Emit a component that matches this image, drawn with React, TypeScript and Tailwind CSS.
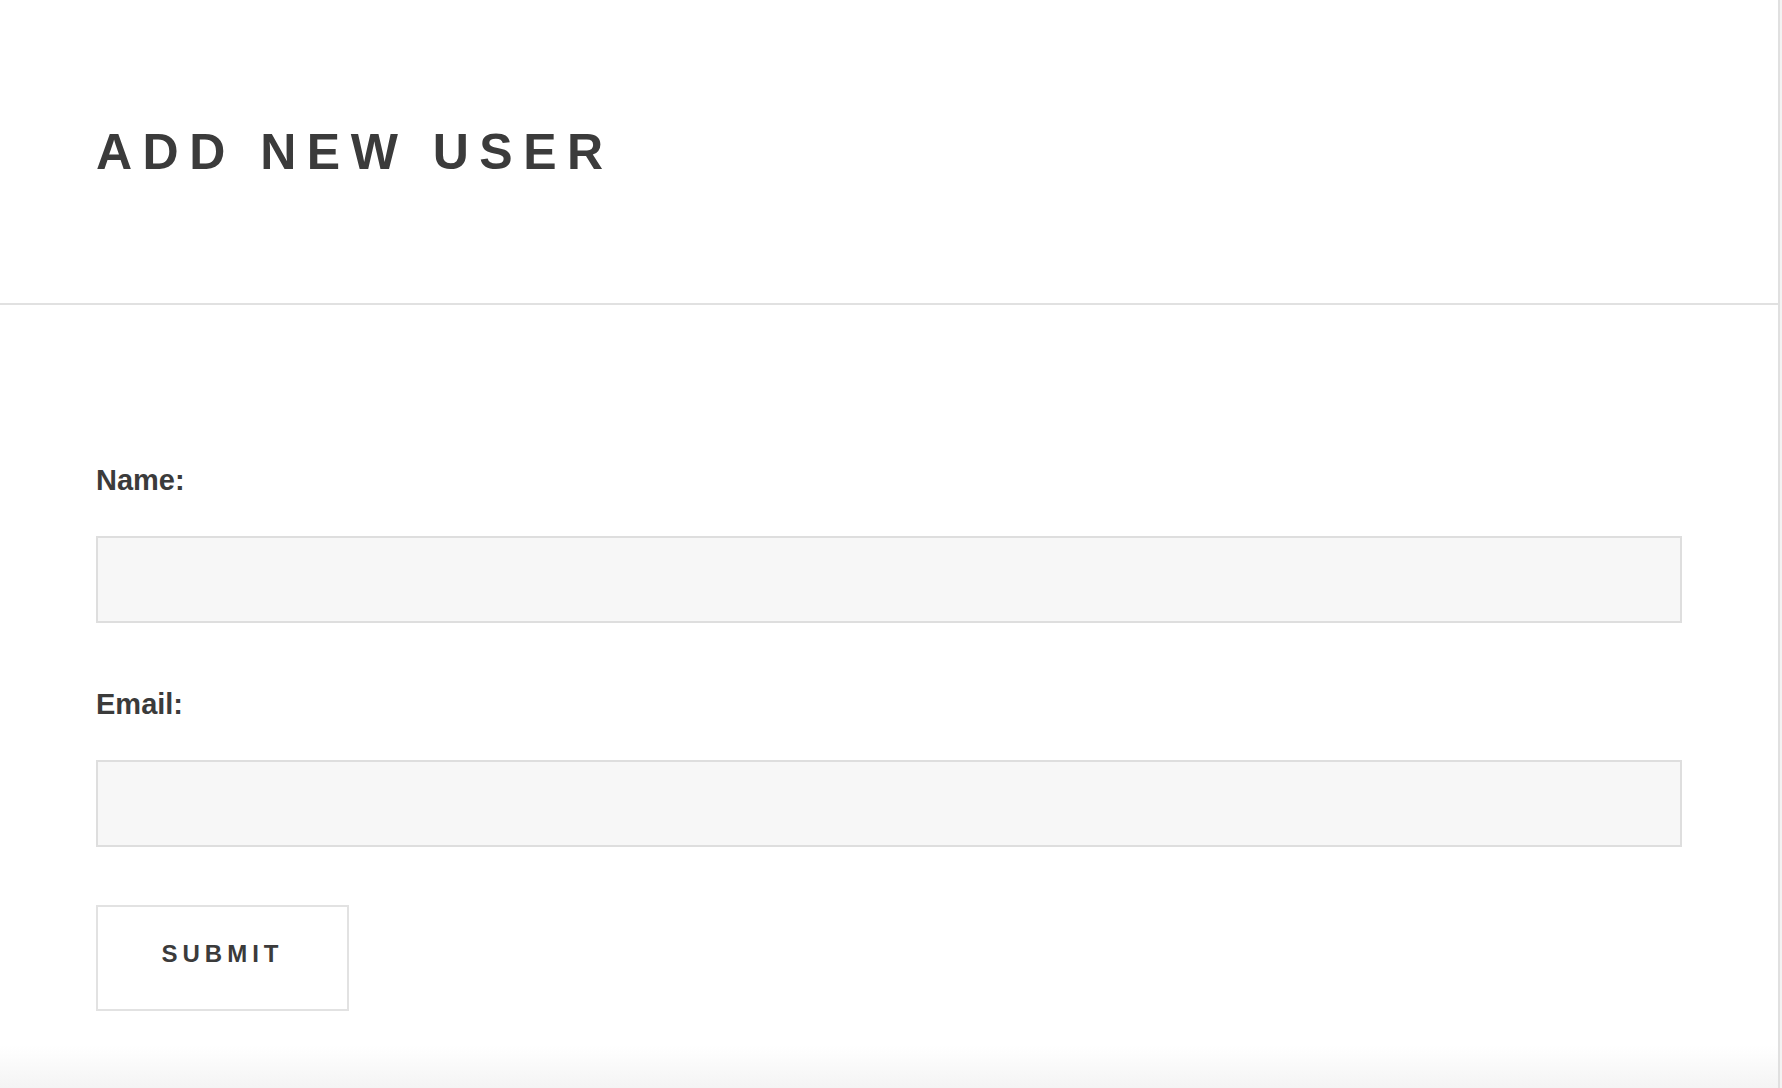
export default function App() {
  return (
    <div className="flex h-[1088px] w-full bg-white font-['Liberation_Sans',Arial,sans-serif] text-[#3b3b3b]">
      <div className="flex flex-1 flex-col bg-[linear-gradient(to_bottom,#ffffff_1045px,#f4f4f4_1088px)]">
        <header className="flex h-[305px] items-center border-b-2 border-[#e1e1e1] px-[96px]">
          <h1 className="text-[50px] font-bold leading-[50px] tracking-[10.5px]">ADD NEW USER</h1>
        </header>

        <form className="flex flex-col px-[96px] pt-[159px]" onSubmit={(e) => e.preventDefault()}>
          <label htmlFor="name" className="mb-[40px] text-[29px] font-bold leading-[32px]">
            Name:
          </label>
          <input
            id="name"
            type="text"
            className="h-[87px] w-full border-2 border-[#dedede] bg-[#f7f7f7] px-4 text-[24px] outline-none"
          />

          <label htmlFor="email" className="mb-[40px] mt-[65px] text-[29px] font-bold leading-[32px]">
            Email:
          </label>
          <input
            id="email"
            type="email"
            className="h-[87px] w-full border-2 border-[#dedede] bg-[#f7f7f7] px-4 text-[24px] outline-none"
          />

          <button
            type="submit"
            className="mt-[58px] flex h-[106px] w-[253px] items-center justify-center border-2 border-[#e2e2e2] bg-white pb-[8px] text-[24px] font-bold leading-none tracking-[5px] text-[#3b3b3b]"
          >
            SUBMIT
          </button>
        </form>
      </div>
      <div className="w-[4px] border-l-2 border-[#e0e0e0] bg-[#f3f3f3]" />
    </div>
  );
}
